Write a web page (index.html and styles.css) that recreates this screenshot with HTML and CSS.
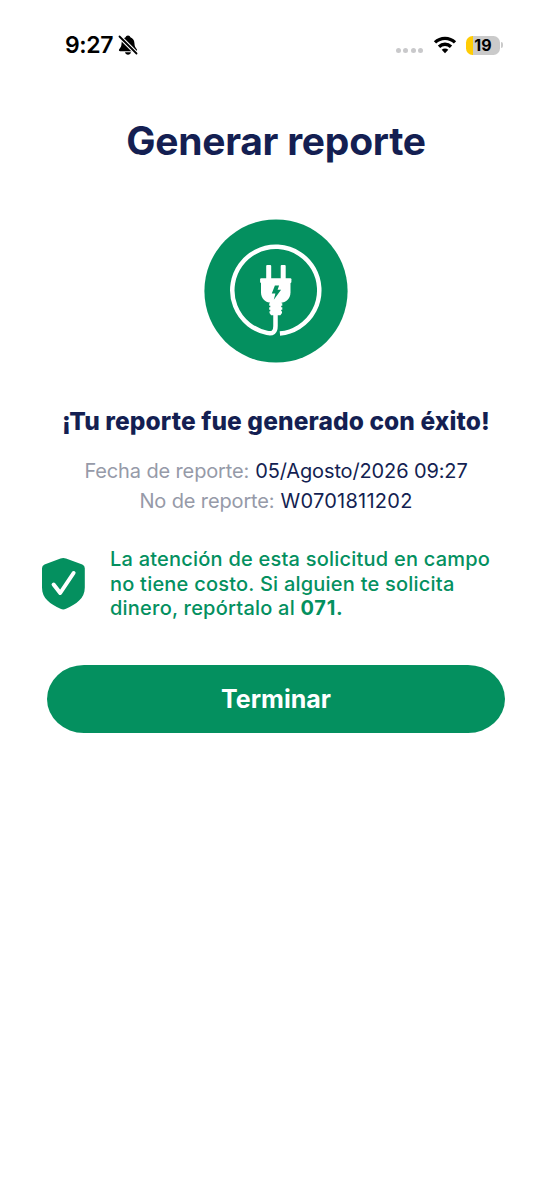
FILE: index.html
```html
<!DOCTYPE html>
<html lang="es">
<head>
<meta charset="utf-8">
<title>Generar reporte</title>
<link rel="stylesheet" href="styles.css">
</head>
<body>
<header class="status">
  <div class="status-left">
    <span class="clock">9:27</span>
    <svg class="bell" viewBox="0 0 20 20">
      <path d="M10 .4c1.300 0 2.200.8 2.400 1.900 2.500.9 3.900 3 4 5.700.2 3.400.9 4.500 2.200 5.900.9 1 .5 2.300-.8 2.300H2.200c-1.300 0-1.700-1.300-.8-2.300C2.700 12.500 3.400 11.400 3.600 8c.1-2.700 1.500-4.800 4-5.700C7.800 1.200 8.700.4 10 .4z"/>
      <path d="M7 17.300h6c-.3 1.500-1.500 2.400-3 2.400s-2.700-.9-3-2.400z"/>
      <path class="bell-gap" d="M1.500 1.500l17 17"/>
      <path class="bell-slash" d="M1.500 1.500l17 17"/>
    </svg>
  </div>
  <div class="status-right">
    <div class="dots"><i></i><i></i><i></i><i></i></div>
    <svg class="wifi" viewBox="0 0 24 18">
      <path class="wave" d="M2 6.400C7.600.9 16.400.9 22 6.400"/>
      <path class="wave" d="M6 10.700c3.400-3.300 8.600-3.300 12 0"/>
      <path d="M12 17.200l-3.300-3.500c1.900-1.700 4.700-1.700 6.600 0z"/>
    </svg>
    <div class="battery-wrap">
      <div class="battery"><span>19</span></div><i class="battery-tip"></i>
    </div>
  </div>
</header>
<main class="content">
  <h1>Generar reporte</h1>
  <svg class="plug" viewBox="0 0 144 144">
    <circle class="green" cx="72" cy="72" r="71.600"/>
    <path class="cord" d="M75.900 114.600A43.500 43.500 0 1 0 63 113.900Q71.500 116 71.500 107V94"/>
    <rect x="62.200" y="46" width="5" height="17" rx="1"/>
    <rect x="76.700" y="46" width="5" height="17" rx="1"/>
    <rect x="56.100" y="59.300" width="31.300" height="4.600" rx="1"/>
    <path d="M57 62h29.500v11.200c0 6-4.200 10.500-10.100 10.500h-9.300C61.200 83.700 57 79.200 57 73.200z"/>
    <path d="M66 83h11.500v1.300h.8v2.500h-1.100v1.500h1.100v2.500h-1.100v1.400h.8v1.700l-1.600 2.300h-9.300l-1.600-2.300v-1.700h.8v-1.400h-1.100v-2.500h1.100v-1.500h-1.100v-2.500h.8z"/>
    <path class="green" d="M70.900 66.500h4.200l-1.500 4.300h3.500l-7.300 10 1.600-6.200h-3.600z"/>
  </svg>
  <h2>¡Tu reporte fue generado con éxito!</h2>
  <dl class="details">
    <div class="row date"><dt>Fecha de reporte:</dt><dd>05/Agosto/2026 09:27</dd></div>
    <div class="row number"><dt>No de reporte:</dt><dd>W0701811202</dd></div>
  </dl>
  <section class="notice">
    <svg class="shield" viewBox="0 0 44 53">
      <path class="green" d="M19.500 1.500Q22.300.3 25 1.500L41.300 7.600Q43.800 8.600 43.800 11.300V30.500C43.800 42 35 46.800 25 51.800Q22.300 53 19.500 51.800C9.600 46.800 1 42 1 30.500V11.300Q1 8.600 3.500 7.600z"/>
      <path class="check" d="M12.600 27.500l6.600 8.500L32.600 16"/>
    </svg>
    <p><span class="line">La atención de esta solicitud en campo</span><span class="line">no tiene costo. Si alguien te solicita</span><span class="line">dinero, repórtalo al <strong>071.</strong></span></p>
  </section>
  <button class="finish" type="button">Terminar</button>
</main>
</body>
</html>
```
FILE: styles.css
```css
* { box-sizing: border-box; }
body {
  margin: 0;
  min-height: 1200px;
  background: #fff;
  color: #141f52;
  font-family: Inter, "Liberation Sans", sans-serif;
}
svg { display: block; flex: none; }
.status {
  display: flex;
  justify-content: space-between;
  height: 90px;
  padding: 30px 49px 0 65px;
  color: #000;
}
.status-left, .status-right { display: flex; align-items: center; height: 30px; }
.status-left { gap: 5px; }
.clock { font-size: 23px; font-weight: 600; letter-spacing: -.35px; }
.bell { width: 20px; height: 20px; }
.bell-gap { stroke: #fff; stroke-width: 4; }
.bell-slash { stroke: #000; stroke-width: 1.8; stroke-linecap: round; }
.dots { display: flex; gap: 2.500px; margin: 11px 9.500px 0 0; }
.dots i { width: 5px; height: 5px; border-radius: 50%; background: #c9c9cb; }
.wifi { width: 24px; height: 18px; margin-right: 9.500px; }
.wave { fill: none; stroke: #000; stroke-width: 3.3; }
.battery-wrap { display: flex; align-items: center; gap: 1px; }
.battery {
  display: grid;
  place-items: center;
  width: 34px;
  height: 19px;
  border-radius: 6.500px;
  background: linear-gradient(90deg, #ffcc05 7px, #cacaca 7px);
  font-size: 16px;
  font-weight: 700;
  line-height: 19px;
}
.battery-tip { width: 2px; height: 6px; border-radius: 0 2px 2px 0; background: #cacaca; }
.content { display: flex; flex-direction: column; align-items: center; padding-top: 26px; }
h1, h2, p, dl, dd { margin: 0; }
h1 { font-size: 39px; line-height: 50px; font-weight: 700; letter-spacing: -.27px; white-space: nowrap; }
.plug { width: 144px; height: 144px; margin-top: 53px; fill: #fff; }
.green { fill: #04905f; }
.cord { fill: none; stroke: #fff; stroke-width: 4.500; }
h2 { margin-top: 41px; font-size: 24.500px; line-height: 34px; font-weight: 800; letter-spacing: .11px; white-space: nowrap; }
.details { margin-top: 18px; font-size: 20px; line-height: 30px; letter-spacing: -.13px; }
.row { display: flex; justify-content: center; gap: 6px; white-space: nowrap; }
.number dd { letter-spacing: .25px; }
dt { color: #969aa8; }
.notice { display: flex; align-self: stretch; gap: 25px; margin-top: 31px; padding-left: 41px; }
.shield { width: 44px; height: 53px; margin-top: 10px; }
.check { fill: none; stroke: #fff; stroke-width: 4; stroke-linecap: round; stroke-linejoin: round; }
.notice p { color: #04905f; font-size: 20px; line-height: 24.500px; font-weight: 500; letter-spacing: .22px; white-space: nowrap; }
.line { display: block; }
.notice strong { font-weight: 700; letter-spacing: .7px; }
.finish {
  width: 458px;
  height: 68px;
  margin-top: 44px;
  padding: 0;
  border: 0;
  border-radius: 37px / 34px;
  background: #04905f;
  color: #fff;
  font: 700 25px/68px Inter, "Liberation Sans", sans-serif;
}
```
